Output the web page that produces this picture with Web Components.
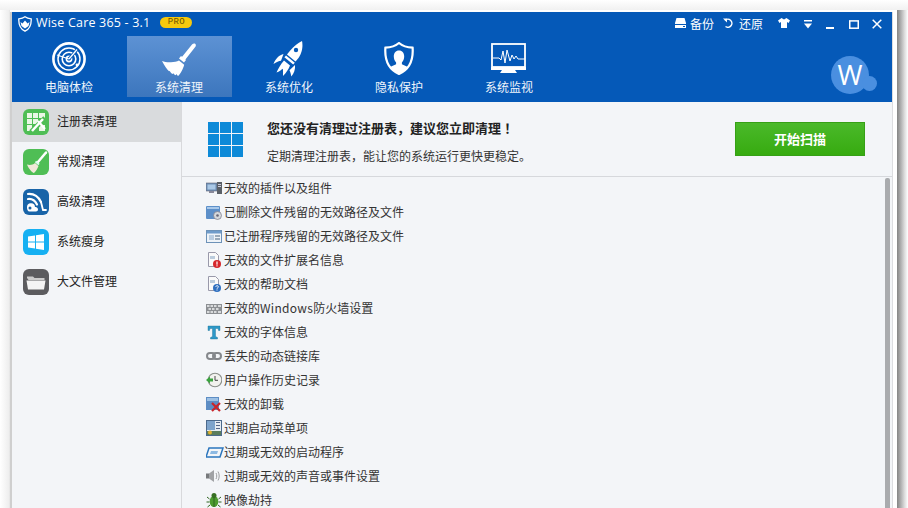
<!DOCTYPE html>
<html><head><meta charset="utf-8">
<style>
html,body{margin:0;padding:0;width:908px;height:508px;overflow:hidden;background:#fff;font-family:"Noto Sans CJK SC","Noto Sans",sans-serif;}
</style></head>
<body>
<wc-app>
  <wc-titlebar slot="top"></wc-titlebar>
  <wc-nav slot="top">
    <wc-nav-item icon="radar">电脑体检</wc-nav-item>
    <wc-nav-item icon="broom" active>系统清理</wc-nav-item>
    <wc-nav-item icon="rocket">系统优化</wc-nav-item>
    <wc-nav-item icon="shield">隐私保护</wc-nav-item>
    <wc-nav-item icon="monitor">系统监视</wc-nav-item>
    <wc-avatar></wc-avatar>
  </wc-nav>
  <wc-sidebar slot="side">
    <wc-side-item icon="reg" active>注册表清理</wc-side-item>
    <wc-side-item icon="clean">常规清理</wc-side-item>
    <wc-side-item icon="adv">高级清理</wc-side-item>
    <wc-side-item icon="win">系统瘦身</wc-side-item>
    <wc-side-item icon="folder">大文件管理</wc-side-item>
  </wc-sidebar>
  <wc-banner slot="main"></wc-banner>
  <wc-list slot="main">
    <wc-row icon="plugin">无效的插件以及组件</wc-row>
    <wc-row icon="del">已删除文件残留的无效路径及文件</wc-row>
    <wc-row icon="inst">已注册程序残留的无效路径及文件</wc-row>
    <wc-row icon="ext">无效的文件扩展名信息</wc-row>
    <wc-row icon="help">无效的帮助文档</wc-row>
    <wc-row icon="fw">无效的<span style="letter-spacing:.3px">Windows</span>防火墙设置</wc-row>
    <wc-row icon="font">无效的字体信息</wc-row>
    <wc-row icon="dll">丢失的动态链接库</wc-row>
    <wc-row icon="hist">用户操作历史记录</wc-row>
    <wc-row icon="unin">无效的卸载</wc-row>
    <wc-row icon="menu">过期启动菜单项</wc-row>
    <wc-row icon="start">过期或无效的启动程序</wc-row>
    <wc-row icon="sound">过期或无效的声音或事件设置</wc-row>
    <wc-row icon="bug">映像劫持</wc-row>
  </wc-list>
</wc-app>
<script>
const ICONS = {
  radar:`<svg width="36" height="36" viewBox="0 0 36 36" fill="none" stroke="#fff"><circle cx="18" cy="18" r="15.6" stroke-width="2.6"/><circle cx="18" cy="18" r="11" stroke-width="1.5"/><circle cx="18" cy="18" r="6.8" stroke-width="1.6"/><circle cx="18" cy="18" r="2.6" stroke-width="1.6"/><path d="M18 18L27 7.5" stroke="#0559b8" stroke-width="3"/><path d="M18 18L26 8.5" stroke-width="1.3"/><path d="M18 18L6 14" stroke-width="1.2"/><circle cx="26" cy="24" r="1.4" fill="#fff" stroke="none"/></svg>`,
  broom:`<svg width="36" height="36" viewBox="0 0 36 36" fill="#fff"><path d="M21.5 16.5L32 3.5c1-1.2 2.6-1.4 3.4-.6.8.9.6 2.3-.4 3.4L25 19z" transform="translate(-1 0)"/><path d="M18 17.5l2-2.4 5 4-2 2.4z"/><path d="M17 19.5l5.2 4.2C21 28 18.5 33 16 35c-.8-.6-1.2-1.200-1.500-2l-.8 1.200c-1-.3-1.800-1-2.400-2l-.8.800c-1.200-.6-2-1.600-2.700-3l-.8.300C5 28.500 2 24 0 20c2.500 1.200 6 1.300 9 1.200 3.200-.2 6-.6 8-1.700z" transform="translate(1 0)"/></svg>`,
  rocket:`<svg width="32" height="36" viewBox="0 0 32 36" fill="#fff"><path d="M29 0c1.200 5.500 0 12-3.500 17l-3 3.500-8.500-7 3-3.800C20.500 5.500 25 2 29 0z"/><path d="M13 14.500l8.800 7.200-1.600 1.700-8.800-7.100z"/><circle cx="23" cy="9" r="2.200" fill="#0559b8"/><path d="M10.500 13c-4 .8-8 4.600-10 10 2.800-1.900 5.500-2.900 7.500-3.200z"/><path d="M11 19.500l6 5c-1.400 3.600-3.600 7.200-7 10.500 0-3 .2-5.500-.2-7.200-1.400 1-3.500 2.800-6.300 3.700 1.500-3.500 4-8 7.500-12z"/><path d="M22 24c.5 4-1 8.500-3.700 11.500-.4-2.500-.8-4.500-1.800-6.300z"/></svg>`,
  shield:`<svg width="30" height="33" viewBox="0 0 30 33"><path d="M15 1c3.500 3 8.500 4.500 13.600 4.700C29.500 18 25 27.500 15 32 5 27.500.5 18 1.400 5.700 6.500 5.500 11.500 4 15 1z" fill="none" stroke="#fff" stroke-width="2.200"/><path d="M15 8.500c3.300 0 5.200 2.600 5.200 6 0 2.500-1 4.600-2.300 5.900v1.800c2 1.200 4.600 1.800 6.300 3C22 28 18.500 30 15 31.500 11.500 30 8 28 5.800 25.200c1.700-1.200 4.300-1.800 6.300-3v-1.800c-1.300-1.300-2.300-3.400-2.300-5.900 0-3.400 1.900-6 5.200-6z" fill="#fff"/></svg>`,
  monitor:`<svg width="36" height="31" viewBox="0 0 36 31"><rect x="1" y="1" width="33" height="23" fill="none" stroke="#fff" stroke-width="1.800"/><rect x="0" y="24" width="35" height="3" fill="#fff"/><path d="M11 27h13l2 3H9z" fill="#fff"/><path d="M2 15h6l2 2 2-9 2 12 2-13 3 11 2-6 2 4 2-3 2 3h7" fill="none" stroke="#fff" stroke-width="1"/></svg>`,
  reg:`<svg width="26" height="26" viewBox="0 0 26 26"><rect width="26" height="26" rx="6" fill="#4fbe55"/><g fill="#eaf7e6"><rect x="4" y="4" width="5" height="5"/><rect x="10" y="4" width="5" height="5"/><rect x="16" y="4" width="6" height="5"/><rect x="4" y="10" width="5" height="5"/><rect x="10" y="10" width="5" height="5"/><rect x="4" y="16" width="5" height="6"/><rect x="16" y="16" width="6" height="6"/></g><path d="M8 23L22 9" stroke="#4fbe55" stroke-width="5"/><path d="M9 22l11-12" stroke="#fff" stroke-width="2.500"/><path d="M15 12l7 8" stroke="#fff" stroke-width="2.200"/></svg>`,
  clean:`<svg width="26" height="26" viewBox="0 0 26 26"><rect width="26" height="26" rx="6" fill="#4fbe55"/><path d="M23 3.500L15 13" stroke="#fff" stroke-width="2.500" stroke-linecap="round"/><path d="M12.500 12.500l3.500 3" stroke="#dfe" stroke-width="2"/><path d="M12 14l3.500 3c-.8 2.500-2.500 5-4.500 7-2-.5-5.500-4.500-7-8.500 2.500.8 5.700.6 8-1.500z" fill="#f0e8d8"/></svg>`,
  adv:`<svg width="26" height="26" viewBox="0 0 26 26"><rect width="26" height="26" rx="6" fill="#1864a8"/><g fill="none" stroke="#fff" stroke-linecap="round"><path d="M5 5c6-.5 10 2 13 8" stroke-width="2.200"/><path d="M5 10c4-.5 7 1.500 9 5.500" stroke-width="2.200"/><path d="M18 13l2 8h3" stroke-width="1.800"/></g><path d="M4 18.500a4 4 0 0 1 8-.5c1 0 3 .5 3 2.500 0 1-1 2-2 2H6.500C4.800 22.500 4 20.500 4 18.500z" fill="#fff"/><circle cx="7" cy="19" r="1.500" fill="#1864a8"/></svg>`,
  win:`<svg width="26" height="26" viewBox="0 0 26 26"><rect width="26" height="26" rx="6" fill="#16b0f2"/><path d="M5 7.500l7-1v6H5zM13 6.300l8-1.200v7.400h-8zM5 13.500h7v6l-7-1zM13 13.500h8v7.400l-8-1.200z" fill="#fff"/></svg>`,
  folder:`<svg width="26" height="26" viewBox="0 0 26 26"><rect width="26" height="26" rx="6" fill="#5c5c5f"/><path d="M4 9V7.500h6l1.500 1.500h10v2h-16z" fill="#ccc"/><path d="M3.500 11.500h19l-1.500 9H5z" fill="#f4f4f4"/></svg>`,
  plugin:`<svg width="16" height="16" viewBox="0 0 16 16"><rect x="0" y="3" width="11" height="8" fill="#6d8fb5" stroke="#667" stroke-width=".6"/><rect x="1.500" y="4.500" width="8" height="5" fill="#aac8e6"/><rect x="3" y="11" width="5" height="2" fill="#889"/><rect x="11" y="2" width="5" height="12" fill="#5a5f66"/><rect x="12" y="4" width="3" height="1" fill="#ccd"/><rect x="12" y="6" width="3" height="1" fill="#ccd"/></svg>`,
  del:`<svg width="16" height="16" viewBox="0 0 16 16"><rect x="0" y="2" width="14" height="13" rx="1" fill="#5c8fc9"/><rect x="1" y="3" width="12" height="2" fill="#a8c8ea"/><circle cx="11.500" cy="11.500" r="4" fill="#d4d8dc" stroke="#778" stroke-width=".7"/><circle cx="11.500" cy="11.500" r="1.300" fill="#667"/></svg>`,
  inst:`<svg width="16" height="16" viewBox="0 0 16 16"><rect x=".5" y="2.500" width="15" height="12" fill="#eef3f8" stroke="#6d92b8"/><rect x="1" y="3" width="14" height="2.500" fill="#6f9ccb"/><rect x="3" y="7" width="5" height="5" fill="#b9cde2"/><rect x="9" y="7" width="5" height="2" fill="#9ab"/><rect x="9" y="10" width="5" height="2" fill="#9ab"/></svg>`,
  ext:`<svg width="16" height="16" viewBox="0 0 16 16"><path d="M2.500.5h7l3 3v11h-10z" fill="#fafafa" stroke="#99a"/><rect x="4" y="4" width="5" height="3" fill="#bcd"/><circle cx="11" cy="12" r="4" fill="#d6272c"/><rect x="10.400" y="9.500" width="1.200" height="3.200" fill="#fff"/><rect x="10.400" y="13.300" width="1.200" height="1.100" fill="#fff"/></svg>`,
  help:`<svg width="16" height="16" viewBox="0 0 16 16"><path d="M2.500.5h7l3 3v11h-10z" fill="#fafafa" stroke="#99a"/><rect x="4" y="4" width="5" height="3" fill="#bcd"/><circle cx="11" cy="12" r="4" fill="#2f70c0"/><path d="M9.700 10.800c.2-1.500 2.700-1.500 2.700 0 0 1-1.400 1-1.400 2" fill="none" stroke="#fff" stroke-width=".9"/><rect x="10.500" y="13.500" width="1" height="1" fill="#fff"/></svg>`,
  fw:`<svg width="16" height="16" viewBox="0 0 16 16"><rect x="0" y="4" width="16" height="10" fill="#8c8f93"/><g fill="#d8dadc"><rect x="1" y="5" width="2.500" height="2"/><rect x="4.500" y="5" width="2.500" height="2"/><rect x="8" y="5" width="2.500" height="2"/><rect x="12" y="5" width="3" height="2"/><rect x="2.500" y="8" width="2.500" height="2"/><rect x="6" y="8" width="2.500" height="2"/><rect x="10" y="8" width="2.500" height="2"/><rect x="1" y="11" width="2.500" height="2"/><rect x="4.500" y="11" width="2.500" height="2"/><rect x="8" y="11" width="2.500" height="2"/><rect x="12" y="11" width="3" height="2"/></g></svg>`,
  font:`<svg width="16" height="16" viewBox="0 0 16 16"><path d="M2 2h12v4.500h-1.500L12 4.500H9.500v8l2 1v1.500h-7v-1.500l2-1v-8H4L3.500 6.500H2z" fill="#2d98c8" stroke="#1c6f96" stroke-width=".4"/></svg>`,
  dll:`<svg width="16" height="16" viewBox="0 0 16 16" fill="none" stroke="#85888c" stroke-width="2"><rect x="1" y="5" width="8" height="6" rx="3"/><rect x="7" y="5" width="8" height="6" rx="3"/></svg>`,
  hist:`<svg width="16" height="16" viewBox="0 0 16 16"><circle cx="9" cy="8" r="6.800" fill="#f2f2ef" stroke="#8a8f8a" stroke-width="1.100"/><path d="M9 4v4.300h3" fill="none" stroke="#444" stroke-width="1"/><path d="M0 8l4-3.500v2h3v3H4v2z" fill="#3ba33f"/></svg>`,
  unin:`<svg width="16" height="16" viewBox="0 0 16 16"><rect x="0" y="1" width="13" height="13" fill="#5d8dc4"/><rect x="1" y="2" width="11" height="3" fill="#9cc0e4"/><path d="M6 7l8 8M14 7l-8 8" stroke="#c9252b" stroke-width="2.200"/></svg>`,
  menu:`<svg width="16" height="16" viewBox="0 0 16 16"><rect x=".5" y=".5" width="15" height="15" fill="#e6ecf2" stroke="#4c6a8c"/><rect x="1" y="1" width="8" height="9" fill="#7ea4cc"/><rect x="10" y="2" width="4" height="1" fill="#568"/><rect x="10" y="5" width="4" height="1" fill="#568"/><rect x="10" y="8" width="4" height="1" fill="#568"/><rect x="1" y="11" width="14" height="4" fill="#5b7d5d"/><circle cx="4" cy="12.500" r="2" fill="#e0b030"/></svg>`,
  start:`<svg width="18" height="16" viewBox="0 0 18 16"><path d="M3 4h14l-3 9H0z" fill="none" stroke="#2b75bd" stroke-width="1.500"/><path d="M5 7h7l-1 3H4z" fill="#8db9e2"/></svg>`,
  sound:`<svg width="16" height="16" viewBox="0 0 16 16"><rect x="0" y="5.500" width="3" height="5" fill="#77797c"/><path d="M3 5.500L8 2v12l-5-3.500z" fill="#a0a2a5"/><g fill="none" stroke="#9a9c9f"><path d="M10 5c1 2 1 4 0 6"/><path d="M12 3.500c1.600 3 1.600 6 0 9"/></g></svg>`,
  bug:`<svg width="16" height="16" viewBox="0 0 16 16"><ellipse cx="8" cy="9.500" rx="4.300" ry="5.500" fill="#4d9b2f"/><circle cx="8" cy="3.500" r="2.500" fill="#386f24"/><g stroke="#2f6420" fill="none"><path d="M3.500 7L1 5M3.500 10H.5M4 13l-2.500 2M12.500 7L15 5M12.500 10h3M12 13l2.500 2M8 5v10"/></g></svg>`
};
function def(name, css, html){
  customElements.define(name, class extends HTMLElement{
    constructor(){super();const r=this.attachShadow({mode:'open'});
      const ic=this.getAttribute('icon');
      r.innerHTML='<style>'+css+'</style>'+html.replace('%ICON%',ic?ICONS[ic]:'');
    }
  });
}
def('wc-app',`
:host{display:block;width:908px;height:508px;overflow:hidden}
.top{height:10px;background:linear-gradient(#fff,#f1f1f1)}
.row{display:flex;height:498px}
.ls{width:10px;background:linear-gradient(90deg,#fff,#efefef 85%,#e4e4e4)}
.frame{width:887px;background:#fff;display:flex;padding:2px 0 0 0;box-sizing:border-box}
.win{width:883px;height:520px;flex:none;display:flex;flex-direction:column;background:#f3f5f8;border-left:2px solid #cfcfcf;box-sizing:border-box;border-right:1px solid #dcdde0}
.body{display:flex;flex:1;min-height:0}
.main{flex:1;display:flex;flex-direction:column;min-width:0}
.rs{width:11px;background:linear-gradient(90deg,#858585,#a9a9a9 30%,#dedede 70%,#fff)}
`,`<div class="top"></div><div class="row"><div class="ls"></div><div class="frame"><div class="win"><slot name="top"></slot><div class="body"><slot name="side"></slot><div class="main"><slot name="main"></slot></div></div></div></div><div class="rs"></div></div>`);
def('wc-titlebar',`
:host{display:flex;align-items:center;height:24px;background:#0559b8;color:#fff;box-sizing:border-box;padding-left:6px;font-family:"Noto Sans CJK SC",sans-serif;font-size:12px}
.t{font-family:"Open Sans","Noto Sans",sans-serif;font-size:12.5px;margin-left:4px;letter-spacing:.2px;white-space:nowrap;line-height:20px;margin-top:-2px}
.pro{margin-left:10px;width:32px;height:11px;border-radius:6px;background:#f6c90e;color:#6b5200;font:9px/11px "Liberation Mono",monospace;text-align:center;letter-spacing:.4px;margin-top:-3px}
.sp{flex:1}
svg{display:block;flex:none}
.up{margin-top:-2px}
.lb{line-height:18px;white-space:nowrap}
`,`<svg width="14" height="16" viewBox="0 0 14 16"><path d="M7 .8c1.600 1.300 3.600 1.900 6.200 2C13.500 9 11.500 13 7 15.200 2.500 13 .5 9 .8 2.800c2.600-.1 4.600-.7 6.200-2z" fill="none" stroke="#fff" stroke-width="1.300"/><path d="M2.500 6l2 1.500L7 4.500l2.500 3 2-1.500-1 4L7 12.500 3.500 10z" fill="#fff"/></svg>
<span class="t">Wise Care 365 - 3.1</span><span class="pro">PRO</span><span class="sp"></span>
<svg class="up" width="11" height="10" viewBox="0 0 11 10" style="margin-right:4px"><path d="M1.500 0h8L11 5v5H0V5z" fill="#fff"/><rect x="0" y="6" width="11" height="1" fill="#0559b8"/><rect x="8" y="8" width="2" height="1" fill="#0559b8"/></svg><span class="lb">备份</span>
<svg class="up" width="10" height="10" viewBox="0 0 10 10" style="margin-left:9px;margin-right:6px"><path d="M2 2.500A4 4 0 1 1 2.500 8.500" fill="none" stroke="#fff" stroke-width="1.500"/><path d="M0 .5h4v4z" fill="#fff"/></svg><span class="lb">还原</span>
<svg class="up" width="12" height="10" viewBox="0 0 12 10" style="margin-left:15px"><path d="M3.500 0L0 2.500 1.500 5 3 4v6h6V4l1.500 1L12 2.500 8.500 0 6 1.500z" fill="#fff"/></svg>
<svg width="8" height="9" viewBox="0 0 8 9" style="margin-left:14px"><rect width="8" height="1.500" fill="#fff"/><path d="M0 3.500h8L4 8.500z" fill="#fff"/></svg>
<svg width="8" height="2" viewBox="0 0 8 2" style="margin-left:14px;margin-top:7px"><rect width="8" height="2" fill="#fff"/></svg>
<svg width="10" height="9" viewBox="0 0 10 9" style="margin-left:15px"><rect x=".75" y=".9" width="8.500" height="7.300" fill="none" stroke="#fff" stroke-width="1.500"/></svg>
<svg width="10" height="10" viewBox="0 0 10 10" style="margin-left:13px;margin-right:10px"><path d="M.7.700l8.600 8.600M9.300.700L.7 9.300" stroke="#fff" stroke-width="1.500"/></svg>`);
def('wc-nav',`:host{display:flex;gap:5px;height:66px;box-sizing:border-box;background:#0559b8;padding:0 15px 5px 5px;position:relative}`,`<slot></slot>`);
def('wc-nav-item',`:host{display:flex;flex-direction:column;align-items:center;width:105px;height:61px;box-sizing:border-box;padding-right:1px;color:#fff;font-size:12px;position:relative}
:host([active]){background:linear-gradient(#5d92d4,#3c76bd)}
.i{display:flex;align-items:center;justify-content:center;padding-top:4px;box-sizing:border-box;height:41px}
.l{line-height:18px;margin-top:1px;color:#eef4fb}`,`<div class="i">%ICON%</div><div class="l"><slot></slot></div>`);
def('wc-avatar',`:host{display:block;width:46px;height:39px;position:relative;margin-top:20px;flex:none;margin-left:auto}
.c{width:38px;height:38px;border-radius:50%;background:#4a8fe0;color:#fff;font:27px/38px "Open Sans",sans-serif;text-align:center}
.d{position:absolute;left:31px;top:20px;width:15px;height:15px;border-radius:50%;background:#4a8fe0}`,`<div class="c">W</div><div class="d"></div>`);
def('wc-sidebar',`:host{display:block;width:170px;flex:none;background:#f3f5f8;border-right:1px solid #d8d9dc;box-sizing:border-box}`,`<slot></slot>`);
def('wc-side-item',`:host{display:flex;align-items:center;height:40px;box-sizing:border-box;padding-left:11px;font-size:12px;color:#222;gap:8px}
:host([active]){background:#d9dbdd}svg{display:block}
.t{padding-bottom:4px}`,`%ICON%<span class="t"><slot></slot></span>`);
def('wc-banner',`:host{display:flex;align-items:center;height:75px;box-sizing:border-box;border-bottom:1px solid #d6d8dc;padding:0 27px 0 26px;flex:none}
.g{display:grid;grid-template-columns:repeat(3,11px);grid-auto-rows:11px;gap:1px;margin-right:24px}
.g i{background:#0d8ad8}
.tx{flex:1;display:flex;flex-direction:column;padding-top:5px}
b{font-size:13px;line-height:20px;color:#222;white-space:nowrap}
b em{font-style:normal;font-family:"Noto Sans CJK TC",sans-serif}
span{font-size:12px;line-height:18px;color:#333;margin-top:9px;white-space:nowrap}
button{all:unset;width:130px;height:34px;box-sizing:border-box;text-align:center;border:1px solid #36a016;background:linear-gradient(#4ab92a,#37ab10);color:#fff;font-size:13px;font-weight:700;line-height:28px}`,
`<div class="g"><i></i><i></i><i></i><i></i><i></i><i></i><i></i><i></i><i></i></div><div class="tx"><b>您还没有清理过注册表，建议您立即清理<em>！</em></b><span>定期清理注册表，能让您的系统运行更快更稳定。</span></div><button>开始扫描</button>`);
def('wc-list',`:host{display:flex;flex:1;min-height:0;position:relative}
.l{flex:1;margin-top:-1px}
.s{position:absolute;right:2px;top:1px;bottom:0;width:5px;background:#a9abae;border-radius:2px 2px 0 0}`,`<div class="l"><slot></slot></div><div class="s"></div>`);
def('wc-row',`:host{display:flex;align-items:center;height:24px;padding-left:24px;font-size:12px;color:#333;white-space:nowrap}
.i{width:16px;height:16px;margin-right:2px;flex:none;display:block}
svg{display:block}
.t{padding-bottom:2px}`,`<span class="i">%ICON%</span><span class="t"><slot></slot></span>`);
</script>
</body></html>
